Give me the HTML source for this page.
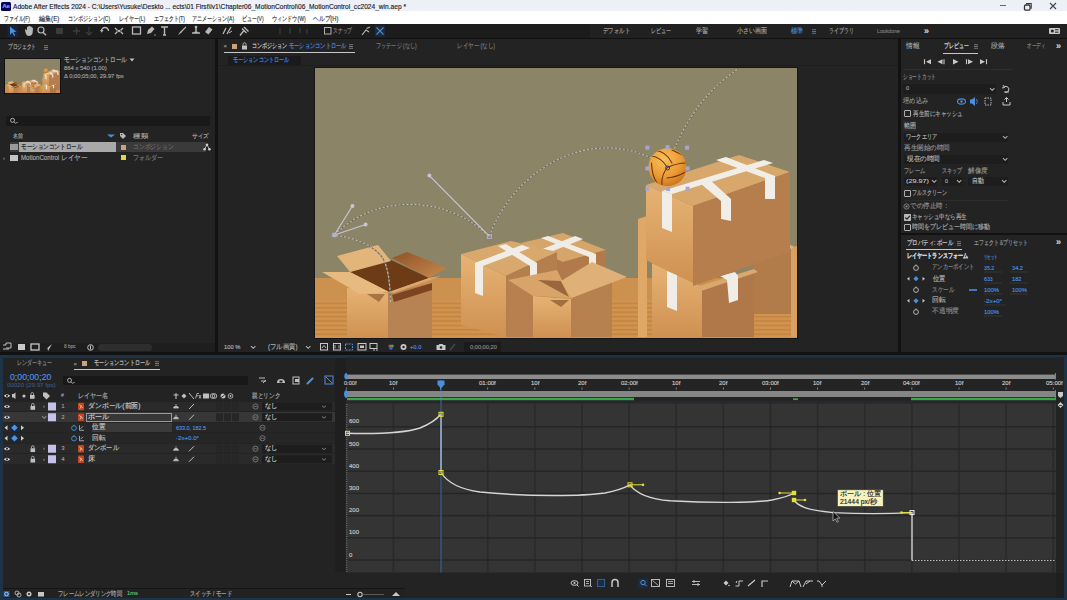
<!DOCTYPE html>
<html><head><meta charset="utf-8">
<style>
*{margin:0;padding:0;box-sizing:border-box}
html,body{width:1067px;height:600px;overflow:hidden;background:#121212;font-family:"Liberation Sans",sans-serif;}
.a{position:absolute}
.t{position:absolute;white-space:nowrap;font-family:"Liberation Sans",sans-serif;-webkit-text-stroke:0.15px currentColor}
</style></head><body>
<div class="a" style="left:0px;top:0px;width:1067px;height:11px;background:#eef0f7;"></div><div class="a" style="left:1px;top:1.5px;width:10px;height:9px;background:#00005b;border-radius:1.5px"></div><div class="t" style="left:2.3px;top:3.10px;font-size:6.2px;line-height:6.2px;color:#9999ff;font-weight:bold;letter-spacing:-0.3px;">Ae</div><div class="t" style="left:13px;top:2.70px;font-size:7.6px;line-height:7.6px;color:#1a1a1a;;--w:393.00;transform:scaleX(0.870);transform-origin:0 0;">Adobe After Effects 2024 - C:\Users\Yusuke\Deskto ... ects\01 First\lv1\Chapter06_MotionControl\06_MotionControl_cc2024_win.aep *</div><div class="a" style="left:1000px;top:5.2px;width:5.5px;height:1px;background:#666;"></div><svg class="a" style="left:1023px;top:1.5px" width="10" height="9"><path d="M3,1.5 H8.2 V6.7" stroke="#333" stroke-width="1.1" fill="none"/><rect x="1.5" y="3" width="5.5" height="5.2" rx="1.2" fill="none" stroke="#333" stroke-width="1.3"/></svg><svg class="a" style="left:1049px;top:1.5px" width="8" height="8"><path d="M1,1L7,7M7,1L1,7" stroke="#444" stroke-width="1.1"/></svg><div class="a" style="left:0px;top:11px;width:1067px;height:13px;background:#ffffff;"></div><div class="t" style="left:4.2px;top:15.10px;font-size:7px;line-height:7px;color:#333;;--w:25.80;transform:scaleX(0.698);transform-origin:0 0;">ファイル(F)</div><div class="t" style="left:38.8px;top:15.10px;font-size:7px;line-height:7px;color:#333;;--w:20.20;transform:scaleX(0.865);transform-origin:0 0;">編集(E)</div><div class="t" style="left:67.5px;top:15.10px;font-size:7px;line-height:7px;color:#333;;--w:42.10;transform:scaleX(0.717);transform-origin:0 0;">コンポジション(C)</div><div class="t" style="left:118.9px;top:15.10px;font-size:7px;line-height:7px;color:#333;;--w:26.10;transform:scaleX(0.714);transform-origin:0 0;">レイヤー(L)</div><div class="t" style="left:153.7px;top:15.10px;font-size:7px;line-height:7px;color:#333;;--w:31.00;transform:scaleX(0.705);transform-origin:0 0;">エフェクト(T)</div><div class="t" style="left:192.2px;top:15.10px;font-size:7px;line-height:7px;color:#333;;--w:42.10;transform:scaleX(0.722);transform-origin:0 0;">アニメーション(A)</div><div class="t" style="left:241.8px;top:15.10px;font-size:7px;line-height:7px;color:#333;;--w:21.60;transform:scaleX(0.712);transform-origin:0 0;">ビュー(V)</div><div class="t" style="left:271.8px;top:15.10px;font-size:7px;line-height:7px;color:#333;;--w:33.80;transform:scaleX(0.730);transform-origin:0 0;">ウィンドウ(W)</div><div class="t" style="left:313px;top:15.10px;font-size:7px;line-height:7px;color:#333;;--w:25.40;transform:scaleX(0.827);transform-origin:0 0;">ヘルプ(H)</div><div class="a" style="left:0px;top:24px;width:1067px;height:15px;background:#1c1c1c;"></div><div class="a" style="left:0px;top:38px;width:1067px;height:1px;background:#111;"></div><div class="a" style="left:590px;top:24px;width:477px;height:14px;background:#212121;"></div><svg class="a" style="left:0px;top:24px;" width="400" height="15" viewBox="0 24 400 15"><rect x="7.5" y="25" width="10.5" height="12" fill="#17253a"/><path d="M10,26.5 L10,35 L12.2,32.6 L14.2,36 L15.3,35.3 L13.4,32 L16.5,31.8 Z" fill="#4a90e2"/><path d="M25.5,32.5 L25,30 Q25,29 26,29.3 L27,30.5 L27,27 Q27.5,26 28.3,27 L28.6,26 Q29.4,25.3 30,26.2 L30.5,26.6 Q31.5,26.2 31.8,27.3 L32,27.5 Q33,27.5 33,28.6 L32.6,33 Q31.8,36 28.8,36 Q26.5,36 25.5,32.5 Z" fill="#b8b8b8"/><circle cx="41" cy="30" r="3" fill="none" stroke="#b8b8b8" stroke-width="1.2"/><path d="M43,32.2 L46,35.3" stroke="#b8b8b8" stroke-width="1.4"/><rect x="56" y="28" width="7" height="6" fill="#3c3c3c" rx="1"/><path d="M73,31 H80 M76.5,27.5 V34.5" stroke="#3c3c3c" stroke-width="1.3"/><path d="M89,27 V34 M86,32 L89,35 L92,32" stroke="#3c3c3c" stroke-width="1.2" fill="none"/><path d="M101.5,31 A3.5,3.5 0 1 1 108.5,31" stroke="#b8b8b8" stroke-width="1.3" fill="none"/><path d="M100,30 L101.7,32.8 L103.5,30" fill="#b8b8b8"/><path d="M115,28 L117.5,30.5 M123,28 L120.5,30.5 M115,34 L117.5,31.5 M123,34 L120.5,31.5" stroke="#b8b8b8" stroke-width="1.3"/><circle cx="119" cy="31" r="1.2" fill="#b8b8b8"/><rect x="132.5" y="27" width="8" height="7" fill="none" stroke="#b8b8b8" stroke-width="1.3"/><path d="M147,34 L148,30 L152,26.5 L154.5,29 L151,33 Z" fill="#b8b8b8"/><circle cx="155" cy="35" r="0.7" fill="#b8b8b8"/><path d="M161,27 H168 M164.5,27 V35 M163,35 H166" stroke="#b8b8b8" stroke-width="1.4"/><path d="M178,35 L180,32 L185.5,26.5 L186.3,27.3 L181,33 Z" fill="#b8b8b8"/><path d="M192,33 H200 M196,26.5 V32 M194,32.5 H198" stroke="#b8b8b8" stroke-width="1.5"/><circle cx="196" cy="27" r="1.3" fill="#b8b8b8"/><path d="M205,32 L209,27 L212.5,29.5 L208.5,34.5 Z" fill="#b8b8b8"/><path d="M223,34 L226,28 M227,34 L231,27" stroke="#b8b8b8" stroke-width="1.3"/><path d="M229,33 L232,31" stroke="#b8b8b8" stroke-width="1"/><path d="M240,35.5 L243.5,31 M242,28.5 L246.5,33 M244,27 L248.5,31.5" stroke="#b8b8b8" stroke-width="1.4"/><path d="M280,28 V34 M290,28 V34 M300,28 V33 M307,29 V34" stroke="#3a3a3a" stroke-width="1.3"/><rect x="324.5" y="27.5" width="6.5" height="6.5" fill="none" stroke="#b0b0b0" stroke-width="1"/><path d="M362,35 L366,30 L369,32 M366.5,28.5 L370,27" stroke="#b8b8b8" stroke-width="1.2" fill="none"/><rect x="375" y="25.5" width="10" height="11" fill="#1c2a3c"/><path d="M376.5,27.5 L383.5,34.5 M383.5,27.5 L376.5,34.5" stroke="#4a8ad0" stroke-width="1.1"/></svg><div class="t" style="left:333px;top:28.05px;font-size:6.5px;line-height:6.5px;color:#8a8a8a;;--w:19.00;transform:scaleX(0.679);transform-origin:0 0;">スナップ</div><div class="t" style="left:603px;top:28.05px;font-size:6.5px;line-height:6.5px;color:#a0a0a0;;--w:27.00;transform:scaleX(0.771);transform-origin:0 0;">デフォルト</div><div class="t" style="left:651px;top:28.05px;font-size:6.5px;line-height:6.5px;color:#a0a0a0;;--w:20.00;transform:scaleX(0.714);transform-origin:0 0;">レビュー</div><div class="t" style="left:696px;top:28.05px;font-size:6.5px;line-height:6.5px;color:#a0a0a0;;--w:12.00;transform:scaleX(0.857);transform-origin:0 0;">学習</div><div class="t" style="left:737px;top:28.05px;font-size:6.5px;line-height:6.5px;color:#a0a0a0;;--w:30.00;transform:scaleX(0.857);transform-origin:0 0;">小さい画面</div><div class="t" style="left:791px;top:28.05px;font-size:6.5px;line-height:6.5px;color:#4a8fe0;;--w:12.00;transform:scaleX(0.857);transform-origin:0 0;">標準</div><div class="t" style="left:829px;top:28.05px;font-size:6.5px;line-height:6.5px;color:#a0a0a0;;--w:25.00;transform:scaleX(0.714);transform-origin:0 0;">ライブラリ</div><svg class="a" style="left:812px;top:28.8px" width="4" height="5"><path d="M0,0.7 H4 M0,2.5 H4 M0,4.3 H4" stroke="#4a8fe0" stroke-width="0.8"/></svg><div class="t" style="left:877px;top:28.75px;font-size:5.5px;line-height:5.5px;color:#7a7a7a;;--w:23.00;transform:scaleX(0.952);transform-origin:0 0;">Lookdone</div><div class="t" style="left:924px;top:26.50px;font-size:9px;line-height:9px;color:#d0d0d0;font-weight:bold;">»</div><div class="a" style="left:1049px;top:28.3px;width:11px;height:6px;background:#c8c8c8;border-radius:1px"></div><svg class="a" style="left:1049px;top:28.3px" width="11" height="6"><circle cx="3.3" cy="3" r="1.5" fill="#222"/><path d="M6,1.8 H9.5 M6,4.2 H9.5" stroke="#222" stroke-width="1"/></svg><div class="a" style="left:0px;top:39px;width:1067px;height:316px;background:#121212;"></div><div class="a" style="left:0px;top:39px;width:215px;height:313px;background:#232323;"></div><div class="t" style="left:7.7px;top:44.25px;font-size:6.5px;line-height:6.5px;color:#a8a8a8;;--w:28.20;transform:scaleX(0.671);transform-origin:0 0;">プロジェクト</div><svg class="a" style="left:43.6px;top:45.0px" width="4" height="5"><path d="M0,0.7 H4 M0,2.5 H4 M0,4.3 H4" stroke="#8a8a8a" stroke-width="0.8"/></svg><svg class="a" style="left:4.5px;top:58px" width="56" height="35" viewBox="315 68 482 270" preserveAspectRatio="none"><use href="#art"/><use href="#ballg"/></svg><div class="a" style="left:4px;top:57.5px;width:57px;height:36px;background:transparent;border:0.6px solid #111"></div><div class="t" style="left:64px;top:56.55px;font-size:6.5px;line-height:6.5px;color:#b0b0b0;;--w:63.00;transform:scaleX(0.818);transform-origin:0 0;">モーションコントロール</div><svg class="a" style="left:129px;top:58px" width="6" height="4"><path d="M0.5,0.5 H5.5 L3,3.5 Z" fill="#c0c0c0"/></svg><div class="t" style="left:64px;top:64.70px;font-size:6.2px;line-height:6.2px;color:#a0a0a0;;--w:42.80;transform:scaleX(0.950);transform-origin:0 0;">864 x 540 (1.00)</div><div class="t" style="left:64px;top:72.60px;font-size:6.2px;line-height:6.2px;color:#a0a0a0;;--w:59.70;transform:scaleX(0.938);transform-origin:0 0;">Δ 0;00;05;00, 29.97 fps</div><div class="a" style="left:6px;top:116px;width:204px;height:10px;background:#191919;"></div><svg class="a" style="left:9px;top:117px" width="10" height="8"><circle cx="3.5" cy="3.3" r="2" fill="none" stroke="#b0b0b0" stroke-width="1"/><path d="M5,4.8 L7,6.8" stroke="#b0b0b0" stroke-width="1"/><path d="M7,5 L9,5 L8,6.3 Z" fill="#b0b0b0"/></svg><div class="t" style="left:13.1px;top:133.40px;font-size:6.2px;line-height:6.2px;color:#a8a8a8;;--w:10.10;transform:scaleX(0.842);transform-origin:0 0;">名前</div><svg class="a" style="left:106px;top:133px" width="10" height="6"><path d="M1,1.5 L9,1.5 L5,4.5 Z" fill="#4a8fe0"/></svg><svg class="a" style="left:119px;top:132px" width="8" height="8"><path d="M1,1 L4,1 L7,4 L4,7 L1,4 Z" fill="#b8b8b8"/><circle cx="2.6" cy="2.6" r="0.7" fill="#232323"/></svg><div class="t" style="left:133px;top:133.40px;font-size:6.2px;line-height:6.2px;color:#a8a8a8;;--w:15.00;transform:scaleX(1.250);transform-origin:0 0;">種類</div><div class="t" style="left:192.4px;top:133.40px;font-size:6.2px;line-height:6.2px;color:#a8a8a8;;--w:17.10;transform:scaleX(0.950);transform-origin:0 0;">サイズ</div><div class="a" style="left:10px;top:142px;width:196px;height:10px;background:#3a3a3a;"></div><div class="a" style="left:19px;top:142px;width:97px;height:10px;background:#a9a9a9;"></div><div class="a" style="left:10px;top:144px;width:8px;height:6px;background:#9a9a9a;"></div><div class="t" style="left:21.2px;top:144.35px;font-size:6.5px;line-height:6.5px;color:#1e1e1e;;--w:61.40;transform:scaleX(0.797);transform-origin:0 0;">モーションコントロール</div><div class="a" style="left:121px;top:144.5px;width:5px;height:5px;background:#c9a37c;"></div><div class="t" style="left:133px;top:144.35px;font-size:6.5px;line-height:6.5px;color:#6a6a6a;;--w:40.30;transform:scaleX(0.822);transform-origin:0 0;">コンポジション</div><svg class="a" style="left:203px;top:143px" width="8" height="8"><circle cx="4" cy="1.8" r="1.3" fill="#d0d0d0"/><circle cx="1.6" cy="6.2" r="1.3" fill="#d0d0d0"/><circle cx="6.4" cy="6.2" r="1.3" fill="#d0d0d0"/><path d="M4,2 L1.6,6 M4,2 L6.4,6" stroke="#d0d0d0" stroke-width="0.8"/></svg><div class="t" style="left:3px;top:154.50px;font-size:6px;line-height:6px;color:#888;;">›</div><div class="a" style="left:10px;top:154.5px;width:8px;height:6px;background:#c4c4c4;"></div><div class="t" style="left:21.2px;top:154.55px;font-size:6.5px;line-height:6.5px;color:#a8a8a8;;--w:66.40;transform:scaleX(0.945);transform-origin:0 0;">MotionControl レイヤー</div><div class="a" style="left:121px;top:155px;width:5px;height:5px;background:#e8d24a;"></div><div class="t" style="left:133px;top:154.55px;font-size:6.5px;line-height:6.5px;color:#7a7a7a;;--w:30.20;transform:scaleX(0.863);transform-origin:0 0;">フォルダー</div><div class="a" style="left:0px;top:343px;width:215px;height:9px;background:#1e1e1e;"></div><svg class="a" style="left:0px;top:340px;" width="160" height="12" viewBox="0 340 160 12"><path d="M3,345 h3 v-2 h5 v5 h-5 M3,349 h6" stroke="#c0c0c0" stroke-width="1" fill="none"/><rect x="18" y="344" width="7" height="6" fill="#c8c8c8"/><rect x="31" y="344" width="8" height="6" fill="none" stroke="#c8c8c8" stroke-width="1.3"/><path d="M45,350 L52,344 L48,351 L47.5,348 Z" fill="#c8c8c8"/><circle cx="90.5" cy="347.5" r="2.8" fill="none" stroke="#c0c0c0" stroke-width="1"/><path d="M90.5,345.5 V349.5" stroke="#c0c0c0" stroke-width="1"/></svg><div class="t" style="left:64px;top:345.40px;font-size:4.8px;line-height:4.8px;color:#8a8a8a;;">8 bpc</div><div class="a" style="left:98px;top:344px;width:54px;height:7px;background:#2e2e2e;border-radius:3.5px"></div><div class="a" style="left:217.5px;top:39px;width:680.5px;height:313px;background:#232323;"></div><div class="t" style="left:223.5px;top:43.30px;font-size:6px;line-height:6px;color:#8a8a8a;;">×</div><div class="a" style="left:232px;top:43.5px;width:5px;height:5px;background:#c9a37c;"></div><svg class="a" style="left:241px;top:42px" width="7" height="8"><rect x="1" y="3.5" width="5" height="4" fill="#c0c0c0"/><path d="M2,3.5 V2.3 A1.5,1.5 0 0 1 5,2.3 V3.5" stroke="#c0c0c0" stroke-width="0.9" fill="none"/></svg><div class="t" style="left:252px;top:43.35px;font-size:6.5px;line-height:6.5px;color:#d8d8d8;;--w:35.00;transform:scaleX(0.714);transform-origin:0 0;">コンポジション</div><div class="t" style="left:288.7px;top:43.35px;font-size:6.5px;line-height:6.5px;color:#4a8fe0;;--w:57.70;transform:scaleX(0.749);transform-origin:0 0;">モーションコントロール</div><svg class="a" style="left:349.3px;top:44.3px" width="4" height="5"><path d="M0,0.7 H4 M0,2.5 H4 M0,4.3 H4" stroke="#8a8a8a" stroke-width="0.8"/></svg><div class="a" style="left:224px;top:51.8px;width:131px;height:1.5px;background:#c8c8c8;"></div><div class="t" style="left:376px;top:43.35px;font-size:6.5px;line-height:6.5px;color:#7a7a7a;;--w:40.60;transform:scaleX(0.736);transform-origin:0 0;">フッテージ (なし)</div><div class="t" style="left:457.4px;top:43.35px;font-size:6.5px;line-height:6.5px;color:#7a7a7a;;--w:38.00;transform:scaleX(0.789);transform-origin:0 0;">レイヤー (なし)</div><div class="a" style="left:228px;top:56px;width:73px;height:8.5px;background:#1b1b1b;"></div><div class="t" style="left:232.5px;top:57.05px;font-size:6.5px;line-height:6.5px;color:#4a8fe0;;--w:56.20;transform:scaleX(0.730);transform-origin:0 0;">モーションコントロール</div><div class="a" style="left:217.5px;top:64.5px;width:680.5px;height:1px;background:#1d1d1d;"></div><div class="a" style="left:314px;top:67px;width:484px;height:272px;background:#161616;"></div><svg class="a" style="left:315px;top:68px" width="482" height="270" viewBox="315 68 482 270">
<defs>
<linearGradient id="gL" x1="0" y1="0" x2="0" y2="1"><stop offset="0" stop-color="#e6b374"/><stop offset="1" stop-color="#cf9152"/></linearGradient>
<linearGradient id="gL2" x1="0" y1="0" x2="1" y2="0"><stop offset="0" stop-color="#d89c5c"/><stop offset="1" stop-color="#e8b77b"/></linearGradient>
<linearGradient id="gR" x1="0" y1="0" x2="0" y2="1"><stop offset="0" stop-color="#b98352"/><stop offset="1" stop-color="#b07a4a"/></linearGradient>
<linearGradient id="gFlapR" x1="0" y1="0" x2="1" y2="1"><stop offset="0" stop-color="#8e5226"/><stop offset="1" stop-color="#c98a4e"/></linearGradient>
<radialGradient id="gBall" cx="0.4" cy="0.3" r="0.75"><stop offset="0" stop-color="#f7c15a"/><stop offset="0.6" stop-color="#eb9a35"/><stop offset="1" stop-color="#c9701c"/></radialGradient>
<pattern id="stripes" x="0" y="300" width="10" height="4.4" patternUnits="userSpaceOnUse"><rect width="10" height="4.4" fill="#d19450"/><rect y="2.6" width="10" height="1.6" fill="#c3843f"/></pattern>
<clipPath id="ballclip"><circle cx="667.5" cy="167.3" r="18.6"/></clipPath>
</defs>
<g id="art">
<rect x="315" y="68" width="482" height="270" fill="#8c8466"/>
<!-- floor -->
<rect x="315" y="278" width="482" height="60" fill="#cc904f"/>
<rect x="315" y="300" width="482" height="38" fill="url(#stripes)"/>

<!-- ===== open box (left) ===== -->
<polygon points="347,288 388,293 388,338 347,338" fill="url(#gL)"/>
<polygon points="388,293 432,283 432,338 388,338" fill="#b88352"/>
<!-- interior -->
<polygon points="350,272 391,260 429,278 389,292" fill="#6e3b17"/>
<!-- back left flap -->
<polygon points="337,256 378,245 391,261 350,272" fill="#e2b57b"/>
<!-- back right flap -->
<polygon points="392,258 407,252 447,268 429,278" fill="url(#gFlapR)"/>
<!-- inner front wall -->
<polygon points="392,295 432,283 432,290 394,302" fill="#7c4420"/>
<!-- front left flap -->
<polygon points="322,272 350,272 389,292 360,294" fill="#e7bb80"/>
<!-- front right flap -->
<polygon points="389,292 429,278 441,276 394,293" fill="#dba870"/>
<polygon points="367,294 385,294 379,302" fill="#a77444"/>

<!-- ===== middle back taped box B ===== -->
<polygon points="555,255 606,249 606,292 555,292" fill="#b17a4a"/>

<polygon points="521,243 563,233 606,250 563,262" fill="#d6a56a"/>
<polygon points="563,262 606,250 606,276 563,288" fill="#b17a4a"/>
<!-- tape on B -->
<polygon points="541,238 548,236 596,254 596,276 589,278 589,257" fill="#efece4"/>
<polygon points="530,254 575,236 583,239 538,257" fill="#efece4"/>
<!-- ===== middle box A ===== -->
<polygon points="461,254 511,241 557,252 506,276" fill="#d9a86d"/>
<polygon points="461,254 506,276 506,337 461,325" fill="url(#gL)"/>
<polygon points="506,276 557,252 557,337 506,337" fill="#b57e4d"/>
<!-- tape on A -->
<polygon points="475,263 483,260 483,296 475,293" fill="#f0ede6"/>
<polygon points="475,263 522,245 530,248 483,266" fill="#f0ede6"/>
<polygon points="498,246 506,244 537,263 537,282 530,282 530,266" fill="#f0ede6"/>

<!-- ===== front box C ===== -->
<polygon points="508,281 533,296 533,337 508,337" fill="#b8804e"/>
<polygon points="533,296 571,299 571,337 533,337" fill="url(#gL)"/>
<polygon points="571,299 612,281 612,337 571,337" fill="#b7804f"/>
<polygon points="508,280 557,270 571,298 533,296" fill="#d9a46a"/>
<polygon points="538,280 561,281 569,297" fill="#9a673c"/>
<polygon points="561,281 592,262 627,277 571,298" fill="#e0b079"/>
<polygon points="550,300 569,300 561,307" fill="#a0703f"/>

<!-- ===== right stack ===== -->
<!-- box F (back left column) -->
<polygon points="638,219 647,216 647,337 638,337" fill="#dfa867"/>
<!-- box G back right -->
<polygon points="754,264 792,251 792,314 754,314" fill="#b27b4a"/>
<polygon points="791,248 797,246 797,337 791,337" fill="#d9a060"/>
<polygon points="750,258 788,244 795,247 757,262" fill="#dcb078"/>
<!-- box E -->
<polygon points="652,263 702,287 702,337 652,337" fill="url(#gL)"/>
<polygon points="702,287 754,271 754,337 702,337" fill="#b07848"/>
<polygon points="696,287 754,269 758,272 701,291" fill="#d9a86e"/>
<polygon points="667,271 677,275 677,311 667,307" fill="#f0ede6"/>
<polygon points="720,276 735,272 738,276 738,300 729,303 727,280" fill="#f0ede6"/>
<!-- box D (top) -->
<polygon points="646,185 739,155 790,172 693,206" fill="#d8a76c"/>
<polygon points="646,185 693,206 693,283 646,260" fill="url(#gL)"/>
<polygon points="693,206 790,172 790,252 693,286" fill="#b57e4c"/>
<!-- tape D -->
<polygon points="662,191 672,194 672,232 662,228" fill="#f1eee7"/>
<polygon points="662,191 764,160 773,163 672,194" fill="#f1eee7"/>
<polygon points="716,160 726,157 775,176 775,199 765,199 765,178" fill="#f1eee7"/>
<polygon points="700,183 710,180 731,199 731,221 721,219 721,201" fill="#f1eee7"/>

</g>
<!-- motion path -->
<g fill="none" stroke-width="1.2">
<g stroke="#6a665a">
<path d="M390.5,302 C390,282 388,266 382,257 C374,246 356,238 334.4,235"/>
<path d="M334.4,235 C370,198 440,190 489.4,236.4"/>
<path d="M489.4,236.4 C515,165 600,120 667.5,167.5"/>
<path d="M667.5,167.5 C680,130 700,95 738,69"/>
</g>
<g stroke="#b8b4a6" stroke-dasharray="2.4 1.6">
<path d="M390.5,302 C390,282 388,266 382,257 C374,246 356,238 334.4,235"/>
<path d="M334.4,235 C370,198 440,190 489.4,236.4"/>
<path d="M489.4,236.4 C515,165 600,120 667.5,167.5"/>
<path d="M667.5,167.5 C680,130 700,95 738,69"/>
</g>
</g>
<g stroke="#c8c4dc" stroke-width="1.2" fill="#c8c4dc">
<line x1="334.4" y1="235" x2="352.4" y2="206"/>
<line x1="334.4" y1="235" x2="365.6" y2="224.5"/>
<line x1="489.4" y1="236.4" x2="429.4" y2="175.6"/>
<circle cx="352.4" cy="206" r="1.4"/><circle cx="365.6" cy="224.5" r="1.4"/><circle cx="429.4" cy="175.6" r="1.4"/>
</g>
<rect x="332.2" y="232.8" width="4.4" height="4.4" fill="#b4b0d0"/>
<rect x="487.4" y="234.4" width="4" height="4" fill="none" stroke="#b4b0d0" stroke-width="1"/>

<g id="ballg">
<circle cx="667.5" cy="167.3" r="19" fill="url(#gBall)"/>
<g fill="none" stroke="#6e3608" stroke-width="1.1" stroke-linecap="round" clip-path="url(#ballclip)">
<path d="M651,156 Q661,157 667.5,167.5"/>
<path d="M655,150.5 Q666,151 672,163"/>
<path d="M667.5,167.5 Q661,175 662,185.5"/>
<path d="M651.5,163 Q652,176 657,183"/>
<path d="M667.5,167.5 Q677,163 686,163"/>
<path d="M672,150 Q681,154 685.5,157"/>
<path d="M667,178 Q677,177 684.5,172.5"/>
</g>
</g>
<g fill="#a7a4d6">
<rect x="645.4" y="145.7" width="4" height="4"/><rect x="665.6" y="145.2" width="4" height="4"/><rect x="685.1" y="145.7" width="4" height="4"/>
<rect x="645.4" y="166.4" width="4" height="4"/><rect x="685.6" y="166.4" width="4" height="4"/>
<rect x="645.4" y="186.7" width="4" height="4"/><rect x="666.1" y="187.1" width="4" height="4"/><rect x="685.6" y="186.7" width="4" height="4"/>
</g>
<circle cx="667.6" cy="168" r="2" fill="none" stroke="#3a3a5a" stroke-width="1"/>
</svg>
<div class="a" style="left:217.5px;top:339px;width:680.5px;height:13px;background:#232323;"></div><div class="t" style="left:224px;top:344.30px;font-size:6px;line-height:6px;color:#b0b0b0;;--w:16.40;transform:scaleX(0.964);transform-origin:0 0;">100 %</div><svg class="a" style="left:250.10000000000002px;top:344.6px" width="6.4" height="4.4"><path d="M1,1.1 L3.2,3.3000000000000003 L5.4,1.1" stroke="#b0b0b0" stroke-width="1.1" fill="none"/></svg><div class="t" style="left:267.6px;top:344.05px;font-size:6.5px;line-height:6.5px;color:#b0b0b0;;--w:29.50;transform:scaleX(0.912);transform-origin:0 0;">(フル画質)</div><svg class="a" style="left:304.5px;top:344.6px" width="6.4" height="4.4"><path d="M1,1.1 L3.2,3.3000000000000003 L5.4,1.1" stroke="#b0b0b0" stroke-width="1.1" fill="none"/></svg><svg class="a" style="left:315px;top:340px;" width="150" height="12" viewBox="315 340 150 12"><rect x="320.5" y="343.5" width="7" height="6.5" fill="none" stroke="#c8c8c8" stroke-width="1"/><path d="M322,348 L324,345.5 L326,348" stroke="#c8c8c8" stroke-width="0.9" fill="none"/><rect x="333.5" y="343.5" width="7" height="6.5" fill="none" stroke="#c8c8c8" stroke-width="1"/><path d="M335,345 V348.5 M339,345 V348.5" stroke="#c8c8c8" stroke-width="0.8"/><path d="M345.5,344 H352.5 V350 H345.5 Z" fill="none" stroke="#4a8fe0" stroke-width="1" stroke-dasharray="2 1"/><rect x="358" y="343.5" width="8" height="6.5" fill="none" stroke="#c8c8c8" stroke-width="1"/><rect x="360" y="345.5" width="4" height="2.5" fill="#c8c8c8"/><rect x="370" y="343.5" width="7" height="5" fill="none" stroke="#c8c8c8" stroke-width="1"/><path d="M374,348.5 V351 M376,350 H378" stroke="#c8c8c8" stroke-width="0.9"/><circle cx="390" cy="346" r="1.6" fill="#e04040"/><circle cx="392.2" cy="346" r="1.6" fill="#40b040"/><circle cx="391" cy="348.2" r="1.6" fill="#4060e0"/><circle cx="403.5" cy="347" r="3" fill="#c8c8c8"/><circle cx="403.5" cy="347" r="1.2" fill="#232323"/><path d="M436.5,345 h2 l1,-1 h3 l1,1 h2 v5 h-9 Z" fill="#c8c8c8"/><circle cx="441" cy="347.5" r="1.3" fill="#232323"/><path d="M450,350 L455,344" stroke="#4a4a4a" stroke-width="1.2"/></svg><div class="t" style="left:410px;top:344.30px;font-size:6px;line-height:6px;color:#4a8fe0;;--w:11.40;transform:scaleX(0.961);transform-origin:0 0;">+0.0</div><div class="a" style="left:464px;top:342px;width:37px;height:10px;background:#1b1b1b;"></div><div class="t" style="left:470px;top:344.30px;font-size:6px;line-height:6px;color:#8a8a8a;;--w:26.80;transform:scaleX(0.945);transform-origin:0 0;">0;00;00;20</div><div class="a" style="left:901px;top:39px;width:166px;height:194px;background:#232323;"></div><div class="t" style="left:906.4px;top:43.05px;font-size:6.5px;line-height:6.5px;color:#a0a0a0;;--w:13.50;transform:scaleX(0.964);transform-origin:0 0;">情報</div><div class="t" style="left:943.5px;top:43.05px;font-size:6.5px;line-height:6.5px;color:#e0e0e0;;--w:24.80;transform:scaleX(0.709);transform-origin:0 0;">プレビュー</div><svg class="a" style="left:974.3px;top:44.1px" width="4" height="5"><path d="M0,0.7 H4 M0,2.5 H4 M0,4.3 H4" stroke="#8a8a8a" stroke-width="0.8"/></svg><div class="t" style="left:991px;top:43.05px;font-size:6.5px;line-height:6.5px;color:#a0a0a0;;--w:13.60;transform:scaleX(0.971);transform-origin:0 0;">段落</div><div class="t" style="left:1027px;top:43.05px;font-size:6.5px;line-height:6.5px;color:#808080;;--w:18.00;transform:scaleX(0.643);transform-origin:0 0;">オーディ</div><div class="t" style="left:1056px;top:41.50px;font-size:9px;line-height:9px;color:#d0d0d0;font-weight:bold;">»</div><div class="a" style="left:943px;top:52.5px;width:35px;height:1.5px;background:#c8c8c8;"></div><svg class="a" style="left:920px;top:55px;" width="70" height="12" viewBox="920 55 70 12"><path d="M924.5,59.2 V64.2" stroke="#c8c8c8" stroke-width="1.1"/><path d="M931,59.2 L926,61.7 L931,64.2 Z" fill="#c8c8c8"/><path d="M944,59.2 V64.2" stroke="#c8c8c8" stroke-width="1.1"/><path d="M942.5,59.2 L937.5,61.7 L942.5,64.2 Z" fill="#c8c8c8"/><path d="M953,59 L958.5,61.7 L953,64.4 Z" fill="#c8c8c8"/><path d="M966.5,59.2 V64.2" stroke="#c8c8c8" stroke-width="1.1"/><path d="M968,59.2 L973,61.7 L968,64.2 Z" fill="#c8c8c8"/><path d="M986.5,59.2 V64.2" stroke="#c8c8c8" stroke-width="1.1"/><path d="M980,59.2 L985,61.7 L980,64.2 Z" fill="#c8c8c8"/></svg><div class="a" style="left:903px;top:69px;width:110px;height:1px;background:#2e2e2e;"></div><div class="t" style="left:903px;top:74.25px;font-size:6.5px;line-height:6.5px;color:#909090;;--w:33.00;transform:scaleX(0.673);transform-origin:0 0;">ショートカット</div><div class="a" style="left:903px;top:84px;width:93px;height:10px;background:#1d1d1d;"></div><div class="t" style="left:906px;top:86.20px;font-size:5.6px;line-height:5.6px;color:#a0a0a0;;">0</div><svg class="a" style="left:988.8px;top:86.8px" width="6.4" height="4.4"><path d="M1,1.1 L3.2,3.3000000000000003 L5.4,1.1" stroke="#b0b0b0" stroke-width="1.1" fill="none"/></svg><svg class="a" style="left:950px;top:80px;" width="70" height="30" viewBox="950 80 70 30"><path d="M1004,87 A3,3 0 1 1 1004.5,92 H1009 M1003,85 L1004.5,87.5 L1002,88" stroke="#c8c8c8" stroke-width="1" fill="none"/><ellipse cx="961.5" cy="101.5" rx="4" ry="2.6" fill="none" stroke="#4a8fe0" stroke-width="1.1"/><circle cx="961.5" cy="101.5" r="1.2" fill="#4a8fe0"/><path d="M970,99.5 H972 L975,97 V106 L972,103.5 H970 Z" fill="#4a8fe0"/><path d="M976.5,99 Q978,101.5 976.5,104" stroke="#4a8fe0" stroke-width="0.8" fill="none"/><rect x="985" y="98" width="6" height="7" fill="none" stroke="#c8c8c8" stroke-width="0.9" stroke-dasharray="1.5 1"/><path d="M1003,102 V105 H1010 V102 M1006.5,97.5 V102 M1004.5,99.5 L1006.5,97.5 L1008.5,99.5" stroke="#c8c8c8" stroke-width="1" fill="none"/></svg><div class="t" style="left:903px;top:98.45px;font-size:6.5px;line-height:6.5px;color:#909090;;--w:25.00;transform:scaleX(0.893);transform-origin:0 0;">埋め込み</div><div class="a" style="left:903.5px;top:110.3px;width:7px;height:7px;background:transparent;border:1px solid #b0b0b0;border-radius:1px"></div><div class="t" style="left:913px;top:110.55px;font-size:6.5px;line-height:6.5px;color:#a8a8a8;;--w:50.00;transform:scaleX(0.794);transform-origin:0 0;">再生前にキャッシュ</div><div class="a" style="left:903px;top:121px;width:13px;height:10px;background:#2a2a2a;"></div><div class="t" style="left:904px;top:122.75px;font-size:6.5px;line-height:6.5px;color:#a8a8a8;;--w:12.00;transform:scaleX(0.857);transform-origin:0 0;">範囲</div><div class="a" style="left:904px;top:133px;width:104px;height:9px;background:#1d1d1d;"></div><div class="t" style="left:906px;top:134.35px;font-size:6.5px;line-height:6.5px;color:#b8b8b8;;--w:31.00;transform:scaleX(0.738);transform-origin:0 0;">ワークエリア</div><svg class="a" style="left:1002.3px;top:135.3px" width="6.4" height="4.4"><path d="M1,1.1 L3.2,3.3000000000000003 L5.4,1.1" stroke="#b0b0b0" stroke-width="1.1" fill="none"/></svg><div class="t" style="left:904px;top:144.75px;font-size:6.5px;line-height:6.5px;color:#909090;;--w:46.00;transform:scaleX(0.939);transform-origin:0 0;">再生開始の時間</div><div class="a" style="left:904px;top:155px;width:104px;height:9px;background:#1d1d1d;"></div><div class="t" style="left:907px;top:156.35px;font-size:6.5px;line-height:6.5px;color:#b8b8b8;;--w:33.00;transform:scaleX(0.943);transform-origin:0 0;">現在の時間</div><svg class="a" style="left:1002.3px;top:157.3px" width="6.4" height="4.4"><path d="M1,1.1 L3.2,3.3000000000000003 L5.4,1.1" stroke="#b0b0b0" stroke-width="1.1" fill="none"/></svg><div class="t" style="left:904px;top:167.75px;font-size:6.5px;line-height:6.5px;color:#909090;;--w:21.00;transform:scaleX(0.750);transform-origin:0 0;">フレーム</div><div class="t" style="left:942px;top:167.75px;font-size:6.5px;line-height:6.5px;color:#909090;;--w:20.00;transform:scaleX(0.714);transform-origin:0 0;">スキップ</div><div class="t" style="left:968px;top:167.75px;font-size:6.5px;line-height:6.5px;color:#909090;;--w:20.00;transform:scaleX(0.952);transform-origin:0 0;">解像度</div><div class="a" style="left:904px;top:177px;width:33px;height:8.5px;background:#1d1d1d;"></div><div class="t" style="left:906px;top:178.30px;font-size:6px;line-height:6px;color:#b8b8b8;;--w:23.00;transform:scaleX(1.210);transform-origin:0 0;">(29.97)</div><svg class="a" style="left:930.8px;top:179.10000000000002px" width="6.4" height="4.4"><path d="M1,1.1 L3.2,3.3000000000000003 L5.4,1.1" stroke="#b0b0b0" stroke-width="1.1" fill="none"/></svg><div class="a" style="left:942px;top:177px;width:21px;height:8.5px;background:#1d1d1d;"></div><div class="t" style="left:945px;top:178.65px;font-size:5.3px;line-height:5.3px;color:#b0b0b0;;">0</div><svg class="a" style="left:955.8px;top:179.10000000000002px" width="6.4" height="4.4"><path d="M1,1.1 L3.2,3.3000000000000003 L5.4,1.1" stroke="#b0b0b0" stroke-width="1.1" fill="none"/></svg><div class="a" style="left:968px;top:177px;width:40px;height:8.5px;background:#1d1d1d;"></div><div class="t" style="left:972px;top:178.05px;font-size:6.5px;line-height:6.5px;color:#b8b8b8;;--w:12.00;transform:scaleX(0.857);transform-origin:0 0;">自動</div><svg class="a" style="left:1000.8px;top:179.10000000000002px" width="6.4" height="4.4"><path d="M1,1.1 L3.2,3.3000000000000003 L5.4,1.1" stroke="#b0b0b0" stroke-width="1.1" fill="none"/></svg><div class="a" style="left:903.5px;top:189.5px;width:7px;height:7px;background:transparent;border:1px solid #b0b0b0;border-radius:1px"></div><div class="t" style="left:912px;top:189.75px;font-size:6.5px;line-height:6.5px;color:#a8a8a8;;--w:35.00;transform:scaleX(0.714);transform-origin:0 0;">フルスクリーン</div><div class="a" style="left:904px;top:200px;width:104px;height:1px;background:#2c2c2c;"></div><div class="t" style="left:910px;top:203.15px;font-size:6.5px;line-height:6.5px;color:#909090;;--w:39.00;transform:scaleX(0.929);transform-origin:0 0;">での停止時：</div><svg class="a" style="left:903px;top:203px" width="7" height="7"><circle cx="3.5" cy="3.5" r="2.6" fill="none" stroke="#909090" stroke-width="0.8"/><circle cx="3.5" cy="3.5" r="1.1" fill="#909090"/></svg><div class="a" style="left:903.5px;top:213.9px;width:7px;height:7px;background:transparent;border:1px solid #b0b0b0;border-radius:1px"></div><div class="a" style="left:903.5px;top:213.9px;width:7px;height:7px;background:#b8b8b8;border-radius:1px"></div><svg class="a" style="left:903.5px;top:213.9px" width="7" height="7"><path d="M1.3,3.5 L3,5.2 L5.8,1.8" stroke="#222" stroke-width="1.2" fill="none"/></svg><div class="t" style="left:912px;top:214.15px;font-size:6.5px;line-height:6.5px;color:#a8a8a8;;--w:55.00;transform:scaleX(0.786);transform-origin:0 0;">キャッシュ中なら再生</div><div class="a" style="left:903.5px;top:223.9px;width:7px;height:7px;background:transparent;border:1px solid #b0b0b0;border-radius:1px"></div><div class="t" style="left:912px;top:224.15px;font-size:6.5px;line-height:6.5px;color:#a8a8a8;;--w:78.00;transform:scaleX(0.857);transform-origin:0 0;">時間をプレビュー時間に移動</div><div class="a" style="left:901px;top:235px;width:166px;height:117px;background:#232323;"></div><div class="t" style="left:906.7px;top:239.85px;font-size:6.5px;line-height:6.5px;color:#d8d8d8;;--w:45.90;transform:scaleX(0.770);transform-origin:0 0;">プロパティ: ボール</div><svg class="a" style="left:957.4px;top:240.6px" width="4" height="5"><path d="M0,0.7 H4 M0,2.5 H4 M0,4.3 H4" stroke="#8a8a8a" stroke-width="0.8"/></svg><div class="a" style="left:906px;top:248.8px;width:56px;height:1.5px;background:#c8c8c8;"></div><div class="t" style="left:974px;top:239.85px;font-size:6.5px;line-height:6.5px;color:#9a9a9a;;--w:53.90;transform:scaleX(0.700);transform-origin:0 0;">エフェクト＆プリセット</div><div class="t" style="left:1056px;top:238.10px;font-size:9px;line-height:9px;color:#d0d0d0;font-weight:bold;">»</div><div class="t" style="left:906.7px;top:253.35px;font-size:6.5px;line-height:6.5px;color:#d0d0d0;font-weight:bold;--w:61.00;transform:scaleX(0.726);transform-origin:0 0;">レイヤートランスフォーム</div><div class="t" style="left:984.3px;top:253.50px;font-size:6.2px;line-height:6.2px;color:#4a8fe0;;--w:13.50;transform:scaleX(0.562);transform-origin:0 0;">リセット</div><svg class="a" style="left:901px;top:260px;" width="130" height="60" viewBox="901 260 130 60"><circle cx="916" cy="268" r="2.4" fill="none" stroke="#c0c0c0" stroke-width="0.9"/><path d="M916,265.6 V264.4" stroke="#c0c0c0" stroke-width="0.8"/><path d="M907,278.7 L909.5,276.7 V280.7 Z" fill="#c0c0c0"/><path d="M916,276.09999999999997 L918.6,278.7 L916,281.3 L913.4,278.7 Z" fill="#4a8fe0"/><path d="M925,278.7 L922.5,276.7 V280.7 Z" fill="#c0c0c0"/><circle cx="916" cy="290" r="2.4" fill="none" stroke="#c0c0c0" stroke-width="0.9"/><path d="M916,287.6 V286.4" stroke="#c0c0c0" stroke-width="0.8"/><path d="M907,300.8 L909.5,298.8 V302.8 Z" fill="#c0c0c0"/><path d="M916,298.2 L918.6,300.8 L916,303.40000000000003 L913.4,300.8 Z" fill="#4a8fe0"/><path d="M925,300.8 L922.5,298.8 V302.8 Z" fill="#c0c0c0"/><circle cx="916" cy="312" r="2.4" fill="none" stroke="#c0c0c0" stroke-width="0.9"/><path d="M916,309.6 V308.4" stroke="#c0c0c0" stroke-width="0.8"/><path d="M969,290 H977" stroke="#4a8fe0" stroke-width="1.6"/><path d="M984,272 H1002" stroke="#3a3a3a" stroke-width="0.8"/><path d="M1010,272 H1028" stroke="#3a3a3a" stroke-width="0.8"/><path d="M984,283 H1002" stroke="#3a3a3a" stroke-width="0.8"/><path d="M1010,283 H1028" stroke="#3a3a3a" stroke-width="0.8"/><path d="M984,294 H1002" stroke="#3a3a3a" stroke-width="0.8"/><path d="M1010,294 H1028" stroke="#3a3a3a" stroke-width="0.8"/><path d="M984,305 H1006" stroke="#3a3a3a" stroke-width="0.8"/><path d="M984,316 H1002" stroke="#3a3a3a" stroke-width="0.8"/></svg><div class="t" style="left:932px;top:264.45px;font-size:6.5px;line-height:6.5px;color:#8a8a8a;;--w:42.00;transform:scaleX(0.750);transform-origin:0 0;">アンカーポイント</div><div class="t" style="left:932.8px;top:275.55px;font-size:6.5px;line-height:6.5px;color:#b0b0b0;;--w:12.70;transform:scaleX(0.907);transform-origin:0 0;">位置</div><div class="t" style="left:932px;top:286.55px;font-size:6.5px;line-height:6.5px;color:#8a8a8a;;--w:22.20;transform:scaleX(0.793);transform-origin:0 0;">スケール</div><div class="t" style="left:932px;top:297.35px;font-size:6.5px;line-height:6.5px;color:#b0b0b0;;--w:13.50;transform:scaleX(0.964);transform-origin:0 0;">回転</div><div class="t" style="left:932px;top:308.45px;font-size:6.5px;line-height:6.5px;color:#8a8a8a;;--w:27.00;transform:scaleX(0.964);transform-origin:0 0;">不透明度</div><div class="t" style="left:984.3px;top:264.60px;font-size:6.2px;line-height:6.2px;color:#4a8fe0;;--w:10.30;transform:scaleX(0.855);transform-origin:0 0;">35.2</div><div class="t" style="left:1012px;top:264.60px;font-size:6.2px;line-height:6.2px;color:#4a8fe0;;--w:11.00;transform:scaleX(0.913);transform-origin:0 0;">34.2</div><div class="t" style="left:984.3px;top:275.70px;font-size:6.2px;line-height:6.2px;color:#4a8fe0;;--w:8.70;transform:scaleX(0.842);transform-origin:0 0;">633</div><div class="t" style="left:1012px;top:275.70px;font-size:6.2px;line-height:6.2px;color:#4a8fe0;;--w:9.50;transform:scaleX(0.920);transform-origin:0 0;">182</div><div class="t" style="left:984.3px;top:286.70px;font-size:6.2px;line-height:6.2px;color:#4a8fe0;;--w:15.10;transform:scaleX(0.954);transform-origin:0 0;">100%</div><div class="t" style="left:1012px;top:286.70px;font-size:6.2px;line-height:6.2px;color:#4a8fe0;;--w:15.00;transform:scaleX(0.948);transform-origin:0 0;">100%</div><div class="t" style="left:984.3px;top:297.50px;font-size:6.2px;line-height:6.2px;color:#4a8fe0;;--w:18.20;transform:scaleX(1.004);transform-origin:0 0;">-2x+0°</div><div class="t" style="left:984.3px;top:308.60px;font-size:6.2px;line-height:6.2px;color:#4a8fe0;;--w:15.10;transform:scaleX(0.954);transform-origin:0 0;">100%</div><div class="a" style="left:0px;top:354.5px;width:1067px;height:245.5px;background:#1f3347;"></div><div class="a" style="left:2.5px;top:357.5px;width:1061.5px;height:240px;background:#232323;"></div><div class="t" style="left:16.7px;top:360.05px;font-size:6.5px;line-height:6.5px;color:#8a8a8a;;--w:35.10;transform:scaleX(0.716);transform-origin:0 0;">レンダーキュー</div><div class="t" style="left:73.5px;top:360.80px;font-size:6px;line-height:6px;color:#8a8a8a;;">×</div><div class="a" style="left:82px;top:361px;width:5px;height:5px;background:#c9a37c;"></div><div class="t" style="left:94px;top:360.05px;font-size:6.5px;line-height:6.5px;color:#c8c8c8;;--w:55.80;transform:scaleX(0.725);transform-origin:0 0;">モーションコントロール</div><svg class="a" style="left:155.4px;top:361.0px" width="4" height="5"><path d="M0,0.7 H4 M0,2.5 H4 M0,4.3 H4" stroke="#8a8a8a" stroke-width="0.8"/></svg><div class="a" style="left:74px;top:368.6px;width:86px;height:1.5px;background:#c8c8c8;"></div><div class="t" style="left:10.4px;top:372.90px;font-size:8.8px;line-height:8.8px;color:#4a8fe0;;--w:41.40;transform:scaleX(0.995);transform-origin:0 0;">0;00;00;20</div><div class="t" style="left:7.2px;top:382.80px;font-size:5px;line-height:5px;color:#34557a;;--w:48.60;transform:scaleX(1.240);transform-origin:0 0;">00020 (29.97 fps)</div><div class="a" style="left:63px;top:376px;width:184.5px;height:8.5px;background:#181818;"></div><svg class="a" style="left:66px;top:377px" width="10" height="8"><circle cx="3.5" cy="3.3" r="2" fill="none" stroke="#b0b0b0" stroke-width="1"/><path d="M5,4.8 L7,6.8" stroke="#b0b0b0" stroke-width="1"/><path d="M7,5 L9,5 L8,6.3 Z" fill="#b0b0b0"/></svg><svg class="a" style="left:250px;top:372px;" width="90" height="16" viewBox="250 372 90 16"><path d="M259,378 H265 M261,381 H266 M263,383 L266,380" stroke="#c0c0c0" stroke-width="1" fill="none"/><path d="M277,383 A4,4 0 0 1 285,383 Z" fill="#c0c0c0"/><rect x="279.5" y="380.5" width="3" height="2" fill="#232323"/><rect x="293" y="377" width="6" height="7" fill="none" stroke="#c0c0c0" stroke-width="1"/><rect x="295" y="379" width="4" height="3" fill="#c0c0c0"/><path d="M306.5,383 L312,377.5 Q314,377 313.5,379 L308,384.5 Q306,385 306.5,383 Z" fill="#4a8fe0"/><rect x="325" y="376" width="8" height="8" fill="none" stroke="#4a8fe0" stroke-width="1"/><path d="M326,377 L332,383" stroke="#4a8fe0" stroke-width="1"/></svg><svg class="a" style="left:0px;top:388px;" width="60" height="14" viewBox="0 388 60 14"><path d="M3.8,395.8 Q7,392.6 10.2,395.8 Q7,399 3.8,395.8 Z" fill="#d8d8d8"/><circle cx="7" cy="395.8" r="1.1" fill="#232323"/><path d="M12,394 H13.5 L15.5,392.5 V399 L13.5,397.5 H12 Z" fill="#c0c0c0"/><circle cx="24" cy="396" r="1.6" fill="#c0c0c0"/><rect x="30" y="395" width="4.6" height="3.8" fill="#c0c0c0"/><path d="M31,395 V393.8 A1.3,1.3 0 0 1 33.6,393.8 V395" stroke="#c0c0c0" stroke-width="0.8" fill="none"/><path d="M43,392.5 L46.5,392.5 L50,396 L46.5,399.5 L43,396 Z" fill="#c0c0c0"/></svg><div class="t" style="left:61px;top:393.40px;font-size:5.2px;line-height:5.2px;color:#8a8a8a;;">#</div><div class="t" style="left:78px;top:393.45px;font-size:6.5px;line-height:6.5px;color:#a8a8a8;;--w:30.30;transform:scaleX(0.866);transform-origin:0 0;">レイヤー名</div><svg class="a" style="left:170px;top:390px;" width="70" height="12" viewBox="170 390 70 12"><path d="M176,393 V399 M173.5,395 H178.5" stroke="#c0c0c0" stroke-width="1.1"/><path d="M184,393.5 L186.5,396 L184,398.5 L181.5,396 Z" fill="#c0c0c0"/><path d="M189,393 L194,399" stroke="#c0c0c0" stroke-width="1"/><path d="M195.5,398.5 L197,393.5 H199 M196,395.8 H198.5 M199,395 L201,398.5 M201,395 L199,398.5" stroke="#c0c0c0" stroke-width="0.8" fill="none"/><rect x="203" y="393.5" width="6" height="5" fill="#c0c0c0"/><circle cx="212.5" cy="396" r="2.3" fill="none" stroke="#c0c0c0" stroke-width="0.9"/><circle cx="214.5" cy="396" r="2.3" fill="none" stroke="#c0c0c0" stroke-width="0.9"/><circle cx="223" cy="396" r="2.5" fill="#c0c0c0"/><path d="M221,397.5 Q224,396 225,394" stroke="#232323" stroke-width="0.9" fill="none"/><circle cx="230.5" cy="396" r="2.4" fill="none" stroke="#c0c0c0" stroke-width="0.8"/><circle cx="230.5" cy="396" r="0.9" fill="#c0c0c0"/></svg><div class="t" style="left:251.7px;top:393.25px;font-size:6.5px;line-height:6.5px;color:#a8a8a8;;--w:28.30;transform:scaleX(0.809);transform-origin:0 0;">親とリンク</div><div class="a" style="left:3px;top:401.5px;width:332px;height:9.2px;background:#2a2a2a;"></div><div class="a" style="left:3px;top:412px;width:332px;height:9.7px;background:#373737;"></div><div class="a" style="left:3px;top:422.5px;width:332px;height:9.7px;background:#262626;"></div><div class="a" style="left:3px;top:433px;width:332px;height:9.7px;background:#262626;"></div><div class="a" style="left:3px;top:443.5px;width:332px;height:9.7px;background:#2a2a2a;"></div><div class="a" style="left:3px;top:454px;width:332px;height:9.7px;background:#2a2a2a;"></div><svg class="a" style="left:0px;top:400px;" width="340" height="66" viewBox="0 400 340 66"><path d="M3.8,406.5 Q7,403.3 10.2,406.5 Q7,409.7 3.8,406.5 Z" fill="#d8d8d8"/><circle cx="7" cy="406.5" r="1.1" fill="#2a2a2a"/><rect x="30.5" y="406.0" width="4.6" height="3.8" fill="#c0c0c0"/><path d="M31.5,406.0 V404.8 A1.3,1.3 0 0 1 34.1,404.8 V406.0" stroke="#c0c0c0" stroke-width="0.8" fill="none"/><rect x="48" y="402.5" width="8" height="8" fill="#c4c2e8"/><rect x="78" y="402.7" width="6" height="7.6" rx="1" fill="#c8461e"/><path d="M79.5,404.5 L81,406.5 L80,408.5 M81,405.5 L82.5,408.0" stroke="#f0d0c0" stroke-width="0.8" fill="none"/><path d="M173.5,408.0 A2.6,2.6 0 0 1 178.5,408.0 Z M176,404.0 V405.5" fill="#c0c0c0" stroke="#c0c0c0" stroke-width="0.8"/><path d="M189,409.0 L194,404.0" stroke="#c0c0c0" stroke-width="1"/><rect x="216" y="402.5" width="7" height="8" fill="#262626"/><rect x="224" y="402.5" width="7" height="8" fill="#262626"/><rect x="232" y="402.5" width="7" height="8" fill="#262626"/><circle cx="255.5" cy="406.5" r="2.6" fill="none" stroke="#7a7a7a" stroke-width="0.9"/><path d="M254,406.5 H257" stroke="#7a7a7a" stroke-width="0.8"/><rect x="262" y="402.5" width="70" height="8" fill="#1d1d1d"/><path d="M322,405.7 L324,407.5 L326,405.7" stroke="#999" stroke-width="0.8" fill="none"/><path d="M3.8,417.25 Q7,414.05 10.2,417.25 Q7,420.45 3.8,417.25 Z" fill="#d8d8d8"/><circle cx="7" cy="417.25" r="1.1" fill="#2a2a2a"/><rect x="48" y="413.25" width="8" height="8" fill="#c4c2e8"/><rect x="78" y="413.45" width="6" height="7.6" rx="1" fill="#c8461e"/><path d="M79.5,415.25 L81,417.25 L80,419.25 M81,416.25 L82.5,418.75" stroke="#f0d0c0" stroke-width="0.8" fill="none"/><path d="M173.5,418.75 A2.6,2.6 0 0 1 178.5,418.75 Z M176,414.75 V416.25" fill="#c0c0c0" stroke="#c0c0c0" stroke-width="0.8"/><path d="M189,419.75 L194,414.75" stroke="#c0c0c0" stroke-width="1"/><rect x="216" y="413.25" width="7" height="8" fill="#262626"/><rect x="224" y="413.25" width="7" height="8" fill="#262626"/><rect x="232" y="413.25" width="7" height="8" fill="#262626"/><circle cx="255.5" cy="417.25" r="2.6" fill="none" stroke="#7a7a7a" stroke-width="0.9"/><path d="M254,417.25 H257" stroke="#7a7a7a" stroke-width="0.8"/><rect x="262" y="413.25" width="70" height="8" fill="#1d1d1d"/><path d="M322,416.45 L324,418.25 L326,416.45" stroke="#999" stroke-width="0.8" fill="none"/><path d="M4.5,427.75 L7.5,425.35 V430.15 Z" fill="#d0d0d0"/><rect x="10.5" y="423.25" width="8" height="9" fill="#1e2636"/><path d="M14.5,424.45 L17.8,427.75 L14.5,431.05 L11.2,427.75 Z" fill="#4a94ec"/><path d="M24,427.75 L21,425.35 V430.15 Z" fill="#d0d0d0"/><circle cx="74" cy="428.05" r="2.4" fill="none" stroke="#4a8fe0" stroke-width="0.9"/><path d="M74,425.65 V424.55" stroke="#4a8fe0" stroke-width="0.8"/><path d="M79.5,425.25 V430.25 H84 M80.5,428.75 L83,426.25" stroke="#c0c0c0" stroke-width="0.8" fill="none"/><circle cx="262.5" cy="427.75" r="2.6" fill="none" stroke="#7a7a7a" stroke-width="0.9"/><path d="M261,427.75 H264" stroke="#7a7a7a" stroke-width="0.8"/><path d="M4.5,438.25 L7.5,435.85 V440.65 Z" fill="#d0d0d0"/><rect x="10.5" y="433.75" width="8" height="9" fill="#1e2636"/><path d="M14.5,434.95 L17.8,438.25 L14.5,441.55 L11.2,438.25 Z" fill="#4a94ec"/><path d="M24,438.25 L21,435.85 V440.65 Z" fill="#d0d0d0"/><circle cx="74" cy="438.55" r="2.4" fill="none" stroke="#4a8fe0" stroke-width="0.9"/><path d="M74,436.15 V435.05" stroke="#4a8fe0" stroke-width="0.8"/><path d="M79.5,435.75 V440.75 H84 M80.5,439.25 L83,436.75" stroke="#c0c0c0" stroke-width="0.8" fill="none"/><circle cx="262.5" cy="438.25" r="2.6" fill="none" stroke="#7a7a7a" stroke-width="0.9"/><path d="M261,438.25 H264" stroke="#7a7a7a" stroke-width="0.8"/><path d="M3.8,448.75 Q7,445.55 10.2,448.75 Q7,451.95 3.8,448.75 Z" fill="#d8d8d8"/><circle cx="7" cy="448.75" r="1.1" fill="#2a2a2a"/><rect x="30.5" y="448.25" width="4.6" height="3.8" fill="#c0c0c0"/><path d="M31.5,448.25 V447.05 A1.3,1.3 0 0 1 34.1,447.05 V448.25" stroke="#c0c0c0" stroke-width="0.8" fill="none"/><rect x="48" y="444.75" width="8" height="8" fill="#c4c2e8"/><rect x="78" y="444.95" width="6" height="7.6" rx="1" fill="#c8461e"/><path d="M79.5,446.75 L81,448.75 L80,450.75 M81,447.75 L82.5,450.25" stroke="#f0d0c0" stroke-width="0.8" fill="none"/><path d="M173.5,450.25 A2.6,2.6 0 0 1 178.5,450.25 Z M176,446.25 V447.75" fill="#c0c0c0" stroke="#c0c0c0" stroke-width="0.8"/><path d="M189,451.25 L194,446.25" stroke="#c0c0c0" stroke-width="1"/><rect x="216" y="444.75" width="7" height="8" fill="#262626"/><rect x="224" y="444.75" width="7" height="8" fill="#262626"/><rect x="232" y="444.75" width="7" height="8" fill="#262626"/><circle cx="255.5" cy="448.75" r="2.6" fill="none" stroke="#7a7a7a" stroke-width="0.9"/><path d="M254,448.75 H257" stroke="#7a7a7a" stroke-width="0.8"/><rect x="262" y="444.75" width="70" height="8" fill="#1d1d1d"/><path d="M322,447.95 L324,449.75 L326,447.95" stroke="#999" stroke-width="0.8" fill="none"/><path d="M3.8,459.25 Q7,456.05 10.2,459.25 Q7,462.45 3.8,459.25 Z" fill="#d8d8d8"/><circle cx="7" cy="459.25" r="1.1" fill="#2a2a2a"/><rect x="30.5" y="458.75" width="4.6" height="3.8" fill="#c0c0c0"/><path d="M31.5,458.75 V457.55 A1.3,1.3 0 0 1 34.1,457.55 V458.75" stroke="#c0c0c0" stroke-width="0.8" fill="none"/><rect x="48" y="455.25" width="8" height="8" fill="#c4c2e8"/><rect x="78" y="455.45" width="6" height="7.6" rx="1" fill="#c8461e"/><path d="M79.5,457.25 L81,459.25 L80,461.25 M81,458.25 L82.5,460.75" stroke="#f0d0c0" stroke-width="0.8" fill="none"/><path d="M173.5,460.75 A2.6,2.6 0 0 1 178.5,460.75 Z M176,456.75 V458.25" fill="#c0c0c0" stroke="#c0c0c0" stroke-width="0.8"/><path d="M189,461.75 L194,456.75" stroke="#c0c0c0" stroke-width="1"/><rect x="216" y="455.25" width="7" height="8" fill="#262626"/><rect x="224" y="455.25" width="7" height="8" fill="#262626"/><rect x="232" y="455.25" width="7" height="8" fill="#262626"/><circle cx="255.5" cy="459.25" r="2.6" fill="none" stroke="#7a7a7a" stroke-width="0.9"/><path d="M254,459.25 H257" stroke="#7a7a7a" stroke-width="0.8"/><rect x="262" y="455.25" width="70" height="8" fill="#1d1d1d"/><path d="M322,458.45 L324,460.25 L326,458.45" stroke="#999" stroke-width="0.8" fill="none"/></svg><div class="a" style="left:92px;top:422.8px;width:80px;height:9.5px;background:#3a3a3a;"></div><div class="a" style="left:86px;top:412.8px;width:86px;height:9px;background:transparent;border:1px solid #9a9a9a"></div><div class="t" style="left:43px;top:403.75px;font-size:5.5px;line-height:5.5px;color:#888;;">›</div><div class="t" style="left:61.5px;top:403.80px;font-size:5.4px;line-height:5.4px;color:#a0a0a0;;">1</div><div class="t" style="left:88px;top:403.10px;font-size:6.8px;line-height:6.8px;color:#c8c8c8;;--w:52.50;transform:scaleX(0.981);transform-origin:0 0;">ダンボール(前面)</div><div class="t" style="left:265px;top:403.10px;font-size:6.8px;line-height:6.8px;color:#c8c8c8;;--w:12.50;transform:scaleX(0.893);transform-origin:0 0;">なし</div><svg class="a" style="left:41.3px;top:415.05px" width="6.4" height="4.4"><path d="M1,1.1 L3.2,3.3000000000000003 L5.4,1.1" stroke="#888" stroke-width="1.1" fill="none"/></svg><div class="t" style="left:61.5px;top:414.55px;font-size:5.4px;line-height:5.4px;color:#a0a0a0;;">2</div><div class="t" style="left:88px;top:413.85px;font-size:6.8px;line-height:6.8px;color:#d8d8d8;;--w:20.90;transform:scaleX(0.995);transform-origin:0 0;">ボール</div><div class="t" style="left:265px;top:413.85px;font-size:6.8px;line-height:6.8px;color:#c8c8c8;;--w:12.50;transform:scaleX(0.893);transform-origin:0 0;">なし</div><div class="t" style="left:92.2px;top:424.35px;font-size:6.8px;line-height:6.8px;color:#c0c0c0;;--w:13.30;transform:scaleX(0.950);transform-origin:0 0;">位置</div><div class="t" style="left:92.2px;top:434.85px;font-size:6.8px;line-height:6.8px;color:#c0c0c0;;--w:13.30;transform:scaleX(0.950);transform-origin:0 0;">回転</div><div class="t" style="left:43px;top:446.00px;font-size:5.5px;line-height:5.5px;color:#888;;">›</div><div class="t" style="left:61.5px;top:446.05px;font-size:5.4px;line-height:5.4px;color:#a0a0a0;;">3</div><div class="t" style="left:88px;top:445.35px;font-size:6.8px;line-height:6.8px;color:#c8c8c8;;--w:30.80;transform:scaleX(0.880);transform-origin:0 0;">ダンボール</div><div class="t" style="left:265px;top:445.35px;font-size:6.8px;line-height:6.8px;color:#c8c8c8;;--w:12.50;transform:scaleX(0.893);transform-origin:0 0;">なし</div><div class="t" style="left:43px;top:456.50px;font-size:5.5px;line-height:5.5px;color:#888;;">›</div><div class="t" style="left:61.5px;top:456.55px;font-size:5.4px;line-height:5.4px;color:#a0a0a0;;">4</div><div class="t" style="left:88px;top:455.85px;font-size:6.8px;line-height:6.8px;color:#c8c8c8;;--w:7.10;transform:scaleX(1.014);transform-origin:0 0;">床</div><div class="t" style="left:265px;top:455.85px;font-size:6.8px;line-height:6.8px;color:#c8c8c8;;--w:12.50;transform:scaleX(0.893);transform-origin:0 0;">なし</div><div class="t" style="left:176px;top:425.00px;font-size:6px;line-height:6px;color:#4a8fe0;;--w:30.00;transform:scaleX(0.899);transform-origin:0 0;">633.0, 182.5</div><div class="t" style="left:176px;top:435.00px;font-size:6px;line-height:6px;color:#4a8fe0;;--w:23.00;transform:scaleX(1.018);transform-origin:0 0;">-2x+0.0°</div><div class="a" style="left:335px;top:357.5px;width:11px;height:214px;background:#1f1f1f;"></div><svg class="a" style="left:340px;top:357px;" width="727" height="220" viewBox="340 357 727 220"><rect x="346" y="357.5" width="718" height="44" fill="#232323"/><rect x="347" y="374.6" width="709" height="4.4" fill="#8c8c8c"/><rect x="346" y="379" width="710" height="11.5" fill="#242424"/><rect x="347" y="391" width="709" height="6" fill="#858585"/><rect x="347" y="397.8" width="287" height="2.6" fill="#3aa64a"/><rect x="793" y="398.3" width="5" height="1.8" fill="#3aa64a"/><rect x="911" y="397.8" width="145" height="2.6" fill="#3aa64a"/><path d="M347,373 A2.5,3 0 0 0 347,379.5 Z" fill="#4a8fe0"/><path d="M347,390 A3,4 0 0 0 347,398 Z" fill="#4a8fe0"/><path d="M1055,373 A2.5,3 0 0 1 1055,379.5 Z" fill="#4a8fe0"/><path d="M1055,390 A3,4 0 0 1 1055,398 Z" fill="#4a8fe0"/><rect x="346" y="400.5" width="710" height="3" fill="#2a272c"/><rect x="346" y="403.5" width="710" height="169" fill="#343434"/><rect x="345.50" y="403.5" width="1.6" height="169" fill="#2a2a2a"/><rect x="392.63" y="403.5" width="1.6" height="169" fill="#2a2a2a"/><rect x="439.76" y="403.5" width="1.6" height="169" fill="#2a2a2a"/><rect x="486.89" y="403.5" width="1.6" height="169" fill="#2a2a2a"/><rect x="534.02" y="403.5" width="1.6" height="169" fill="#2a2a2a"/><rect x="581.15" y="403.5" width="1.6" height="169" fill="#2a2a2a"/><rect x="628.28" y="403.5" width="1.6" height="169" fill="#2a2a2a"/><rect x="675.41" y="403.5" width="1.6" height="169" fill="#2a2a2a"/><rect x="722.54" y="403.5" width="1.6" height="169" fill="#2a2a2a"/><rect x="769.67" y="403.5" width="1.6" height="169" fill="#2a2a2a"/><rect x="816.80" y="403.5" width="1.6" height="169" fill="#2a2a2a"/><rect x="863.93" y="403.5" width="1.6" height="169" fill="#2a2a2a"/><rect x="911.06" y="403.5" width="1.6" height="169" fill="#2a2a2a"/><rect x="958.19" y="403.5" width="1.6" height="169" fill="#2a2a2a"/><rect x="1005.32" y="403.5" width="1.6" height="169" fill="#2a2a2a"/><rect x="1052.45" y="403.5" width="1.6" height="169" fill="#2a2a2a"/><rect x="346" y="426.10" width="710" height="1.5" fill="#262626"/><rect x="346" y="448.30" width="710" height="1.5" fill="#262626"/><rect x="346" y="470.50" width="710" height="1.5" fill="#262626"/><rect x="346" y="492.70" width="710" height="1.5" fill="#262626"/><rect x="346" y="514.90" width="710" height="1.5" fill="#262626"/><rect x="346" y="537.10" width="710" height="1.5" fill="#262626"/><rect x="346" y="559.30" width="710" height="1.5" fill="#262626"/><path d="M346.8,404 V572" stroke="#9a9a9a" stroke-width="0.8" stroke-dasharray="1 1.2"/><rect x="345.90" y="387.5" width="0.8" height="2" fill="#a0a0a0"/><rect x="393.03" y="387.5" width="0.8" height="2" fill="#a0a0a0"/><rect x="440.16" y="387.5" width="0.8" height="2" fill="#a0a0a0"/><rect x="487.29" y="387.5" width="0.8" height="2" fill="#a0a0a0"/><rect x="534.42" y="387.5" width="0.8" height="2" fill="#a0a0a0"/><rect x="581.55" y="387.5" width="0.8" height="2" fill="#a0a0a0"/><rect x="628.68" y="387.5" width="0.8" height="2" fill="#a0a0a0"/><rect x="675.81" y="387.5" width="0.8" height="2" fill="#a0a0a0"/><rect x="722.94" y="387.5" width="0.8" height="2" fill="#a0a0a0"/><rect x="770.07" y="387.5" width="0.8" height="2" fill="#a0a0a0"/><rect x="817.20" y="387.5" width="0.8" height="2" fill="#a0a0a0"/><rect x="864.33" y="387.5" width="0.8" height="2" fill="#a0a0a0"/><rect x="911.46" y="387.5" width="0.8" height="2" fill="#a0a0a0"/><rect x="958.59" y="387.5" width="0.8" height="2" fill="#a0a0a0"/><rect x="1005.72" y="387.5" width="0.8" height="2" fill="#a0a0a0"/><rect x="1052.85" y="387.5" width="0.8" height="2" fill="#a0a0a0"/><path d="M346.5,433.3 C375,434 405,433 420,428 C430,424 437,419 441,414 L441,472.5 C447,482 458,489 480,492 C530,497 585,496 605,493 C615,491 624,488 630,484.8 C636,493 648,499 670,500.8 C710,503 755,503 772,500 C782,498 789,496 794,493" fill="none" stroke="#d6d6d6" stroke-width="1.4"/><path d="M794,500 C798,506 806,510 833,512.6 C860,514 890,513.8 912,512.6 L912,560.4" fill="none" stroke="#d6d6d6" stroke-width="1.4"/><path d="M912,560.4 H1056" stroke="#d0d0d0" stroke-width="1" stroke-dasharray="1.5 1.5"/><rect x="440.4" y="380" width="1.1" height="192.5" fill="#4a8fe0" opacity="0.6"/><path d="M437.5,380.5 H444.5 V384.5 L441,388.5 L437.5,384.5 Z" fill="#4a8fe0"/><rect x="345.5" y="431.3" width="4" height="4" fill="none" stroke="#e6e03a" stroke-width="1"/><rect x="439" y="412.3" width="4" height="4" fill="none" stroke="#e6e03a" stroke-width="1"/><rect x="439" y="470.5" width="4" height="4" fill="none" stroke="#e6e03a" stroke-width="1"/><rect x="628" y="482.8" width="4" height="4" fill="none" stroke="#e6e03a" stroke-width="1"/><path d="M630,484.8 H643" stroke="#e6e03a" stroke-width="1"/><circle cx="643" cy="484.8" r="1.3" fill="#e6e03a"/><rect x="791.8" y="490.8" width="4.4" height="4.4" fill="#e6e03a"/><rect x="791.8" y="497.8" width="4.4" height="4.4" fill="#e6e03a"/><path d="M794,493 H779.6 M794,500 H805" stroke="#e6e03a" stroke-width="1"/><circle cx="779.6" cy="493" r="1.3" fill="#e6e03a"/><circle cx="805" cy="500" r="1.3" fill="#e6e03a"/><path d="M912,512.6 H901.5" stroke="#e6e03a" stroke-width="1"/><circle cx="901.5" cy="512.6" r="1.3" fill="#e6e03a"/><rect x="910" y="510.6" width="4" height="4" fill="none" stroke="#f0f0f0" stroke-width="1"/><rect x="837.5" y="489.8" width="45.7" height="16.6" fill="#f6f2bc" stroke="#3a3a30" stroke-width="0.6"/><path d="M833,511.5 L833,521 L835.3,518.8 L837,522.3 L838.3,521.6 L836.7,518.2 L839.8,518 Z" fill="#111" stroke="#ddd" stroke-width="0.6"/><rect x="1056" y="357.5" width="8" height="240" fill="#232323"/><path d="M1058,392 H1063 V396 L1060.5,398 L1058,396 Z" fill="#c8c8c8"/><path d="M1057.5,405 L1060.5,402 L1063.5,405 L1060.5,408 Z" fill="#c8c8c8"/><path d="M1059,405.5 H1062" stroke="#232323" stroke-width="0.7"/></svg><div class="t" style="left:343.5px;top:380.60px;font-size:5.8px;line-height:5.8px;color:#c8c8c8;;--w:12.50;transform:scaleX(0.969);transform-origin:0 0;">0:00f</div><div class="t" style="left:389.28000000000003px;top:380.60px;font-size:5.8px;line-height:5.8px;color:#c8c8c8;;--w:8.30;transform:scaleX(1.029);transform-origin:0 0;">10f</div><div class="t" style="left:479.2900000000001px;top:380.60px;font-size:5.8px;line-height:5.8px;color:#c8c8c8;;--w:16.80;transform:scaleX(1.042);transform-origin:0 0;">01:00f</div><div class="t" style="left:530.6700000000001px;top:380.60px;font-size:5.8px;line-height:5.8px;color:#c8c8c8;;--w:8.30;transform:scaleX(1.029);transform-origin:0 0;">10f</div><div class="t" style="left:577.8000000000001px;top:380.60px;font-size:5.8px;line-height:5.8px;color:#c8c8c8;;--w:8.30;transform:scaleX(1.029);transform-origin:0 0;">20f</div><div class="t" style="left:620.6800000000001px;top:380.60px;font-size:5.8px;line-height:5.8px;color:#c8c8c8;;--w:16.80;transform:scaleX(1.042);transform-origin:0 0;">02:00f</div><div class="t" style="left:672.0600000000001px;top:380.60px;font-size:5.8px;line-height:5.8px;color:#c8c8c8;;--w:8.30;transform:scaleX(1.029);transform-origin:0 0;">10f</div><div class="t" style="left:719.19px;top:380.60px;font-size:5.8px;line-height:5.8px;color:#c8c8c8;;--w:8.30;transform:scaleX(1.029);transform-origin:0 0;">20f</div><div class="t" style="left:762.07px;top:380.60px;font-size:5.8px;line-height:5.8px;color:#c8c8c8;;--w:16.80;transform:scaleX(1.042);transform-origin:0 0;">03:00f</div><div class="t" style="left:813.45px;top:380.60px;font-size:5.8px;line-height:5.8px;color:#c8c8c8;;--w:8.30;transform:scaleX(1.029);transform-origin:0 0;">10f</div><div class="t" style="left:860.58px;top:380.60px;font-size:5.8px;line-height:5.8px;color:#c8c8c8;;--w:8.30;transform:scaleX(1.029);transform-origin:0 0;">20f</div><div class="t" style="left:903.4600000000002px;top:380.60px;font-size:5.8px;line-height:5.8px;color:#c8c8c8;;--w:16.80;transform:scaleX(1.042);transform-origin:0 0;">04:00f</div><div class="t" style="left:954.84px;top:380.60px;font-size:5.8px;line-height:5.8px;color:#c8c8c8;;--w:8.30;transform:scaleX(1.029);transform-origin:0 0;">10f</div><div class="t" style="left:1001.9700000000001px;top:380.60px;font-size:5.8px;line-height:5.8px;color:#c8c8c8;;--w:8.30;transform:scaleX(1.029);transform-origin:0 0;">20f</div><div class="t" style="left:1045.5px;top:380.60px;font-size:5.8px;line-height:5.8px;color:#c8c8c8;;--w:16.80;transform:scaleX(1.042);transform-origin:0 0;">05:00f</div><div class="t" style="left:348.5px;top:418.40px;font-size:6px;line-height:6px;color:#c8c8c8;;--w:10.05;transform:scaleX(1.003);transform-origin:0 0;">600</div><div class="t" style="left:348.5px;top:440.60px;font-size:6px;line-height:6px;color:#c8c8c8;;--w:10.05;transform:scaleX(1.003);transform-origin:0 0;">500</div><div class="t" style="left:348.5px;top:462.80px;font-size:6px;line-height:6px;color:#c8c8c8;;--w:10.05;transform:scaleX(1.003);transform-origin:0 0;">400</div><div class="t" style="left:348.5px;top:485.00px;font-size:6px;line-height:6px;color:#c8c8c8;;--w:10.05;transform:scaleX(1.003);transform-origin:0 0;">300</div><div class="t" style="left:348.5px;top:507.20px;font-size:6px;line-height:6px;color:#c8c8c8;;--w:10.05;transform:scaleX(1.003);transform-origin:0 0;">200</div><div class="t" style="left:348.5px;top:529.40px;font-size:6px;line-height:6px;color:#c8c8c8;;--w:10.05;transform:scaleX(1.003);transform-origin:0 0;">100</div><div class="t" style="left:348.5px;top:551.60px;font-size:6px;line-height:6px;color:#c8c8c8;;--w:3.35;transform:scaleX(1.002);transform-origin:0 0;">0</div><div class="t" style="left:839.6px;top:491.15px;font-size:6.5px;line-height:6.5px;color:#222;;--w:41.40;transform:scaleX(1.024);transform-origin:0 0;">ボール : 位置</div><div class="t" style="left:839.6px;top:498.55px;font-size:6.5px;line-height:6.5px;color:#222;;--w:37.20;transform:scaleX(1.046);transform-origin:0 0;">21444 px/秒</div><div class="a" style="left:346px;top:572.5px;width:710px;height:25px;background:#232323;"></div><svg class="a" style="left:560px;top:574px;" width="280" height="16" viewBox="560 574 280 16"><ellipse cx="574.5" cy="583" rx="3.5" ry="2.3" fill="none" stroke="#c8c8c8" stroke-width="1"/><circle cx="574.5" cy="583" r="1.1" fill="#c8c8c8"/><path d="M577,585 L578.5,586.5" stroke="#c8c8c8"/><rect x="584.5" y="579.5" width="6" height="6.5" fill="none" stroke="#c8c8c8" stroke-width="0.9"/><path d="M586,581.5 H589 M586,583.5 H589 M590,585 L592,587" stroke="#c8c8c8" stroke-width="0.8"/><rect x="596.5" y="578.5" width="9" height="9" fill="#1e2c3e"/><rect x="597.5" y="579.5" width="7" height="7" fill="none" stroke="#4a8fe0" stroke-width="1" stroke-dasharray="1 1"/><path d="M612,587 V582.5 A3,3 0 0 1 618,582.5 V587" stroke="#c8c8c8" stroke-width="1.5" fill="none"/><rect x="638" y="578.5" width="10" height="9" fill="#1e2c3e"/><circle cx="643" cy="582.6" r="2.2" fill="none" stroke="#4a8fe0" stroke-width="1"/><path d="M644.6,584.2 L646.5,586.2" stroke="#4a8fe0" stroke-width="1"/><rect x="651.5" y="579.5" width="8" height="7" fill="none" stroke="#c8c8c8" stroke-width="0.9"/><path d="M652.5,580.5 L658.5,585.5" stroke="#c8c8c8" stroke-width="0.8"/><rect x="666.5" y="579.5" width="8" height="7" fill="none" stroke="#c8c8c8" stroke-width="0.9"/><path d="M668,581.5 H673 M668,583.5 H673" stroke="#c8c8c8" stroke-width="0.8"/><path d="M692,581.5 H700 M692,584.5 H700" stroke="#c8c8c8" stroke-width="0.9"/><path d="M694,580 V583 M698,583 V586" stroke="#c8c8c8" stroke-width="0.9"/><path d="M723.5,583 L726,580.5 L728.5,583 L726,585.5 Z" fill="#c8c8c8"/><circle cx="729" cy="585.5" r="0.8" fill="#c8c8c8"/><path d="M735.5,586 H739 V581 H743 M736,583 L737,581" stroke="#c8c8c8" stroke-width="1" fill="none"/><path d="M748,586 L755,580 M750,584 L753,582" stroke="#c8c8c8" stroke-width="1.2"/><path d="M762,587 V581 H768" stroke="#c8c8c8" stroke-width="1.2" fill="none"/><path d="M790,587 L792,581 H799 L801,587 M792,581 L795.5,584 L799,581" stroke="#c8c8c8" stroke-width="1" fill="none"/><path d="M803,587 L806,581 H813 M806,584 L810,581" stroke="#c8c8c8" stroke-width="1" fill="none"/><path d="M817,581 H819 L822,585 L826,581 M822,585 V587" stroke="#c8c8c8" stroke-width="1" fill="none"/></svg><div class="a" style="left:2.5px;top:588px;width:402.5px;height:1px;background:#151515;"></div><div class="a" style="left:2.5px;top:589px;width:402.5px;height:8.5px;background:#222222;"></div><svg class="a" style="left:0px;top:588px;" width="1067" height="11" viewBox="0 588 1067 11"><rect x="3.5" y="591" width="6" height="6" fill="#2a5a90"/><circle cx="6.5" cy="594" r="1.8" fill="none" stroke="#c8d8f0" stroke-width="0.8"/><circle cx="17" cy="593" r="2" fill="none" stroke="#c8c8c8" stroke-width="0.8"/><circle cx="19" cy="595" r="2" fill="none" stroke="#c8c8c8" stroke-width="0.8"/><circle cx="29" cy="594" r="2.5" fill="#c8c8c8"/><circle cx="29" cy="594" r="1" fill="#1b1b1b"/><rect x="38" y="592" width="6" height="4.5" fill="#c8c8c8"/><rect x="180" y="589.5" width="65" height="8" fill="#222"/><path d="M346,594.5 H351" stroke="#c8c8c8" stroke-width="1"/><circle cx="360" cy="594.5" r="2.2" fill="none" stroke="#c8c8c8" stroke-width="1.1"/><path d="M362.5,594.5 H384" stroke="#5a5a5a" stroke-width="1"/><path d="M392,596 L396,592 L400,596 Z" fill="#c8c8c8"/></svg><div class="t" style="left:58px;top:590.75px;font-size:6.5px;line-height:6.5px;color:#a8a8a8;;--w:64.00;transform:scaleX(0.762);transform-origin:0 0;">フレームレンダリング時間</div><div class="t" style="left:127px;top:591.45px;font-size:5.5px;line-height:5.5px;color:#5ac070;;--w:11.00;transform:scaleX(1.059);transform-origin:0 0;">1ms</div><div class="t" style="left:190px;top:590.75px;font-size:6.5px;line-height:6.5px;color:#a8a8a8;;--w:42.00;transform:scaleX(0.772);transform-origin:0 0;">スイッチ / モード</div><div class="a" style="left:1056px;top:572.5px;width:8px;height:25px;background:#1f1f1f;"></div><script>(function(){var els=document.querySelectorAll(".t");for(var i=0;i<els.length;i++){var e=els[i];var w=parseFloat(e.style.getPropertyValue("--w"));if(!w)continue;e.style.transform="none";var r=document.createRange();r.selectNodeContents(e);var nw=r.getBoundingClientRect().width;if(nw>0){e.style.transform="scaleX("+(w/nw).toFixed(4)+")";e.style.transformOrigin="0 0";}}})();</script></body></html>
